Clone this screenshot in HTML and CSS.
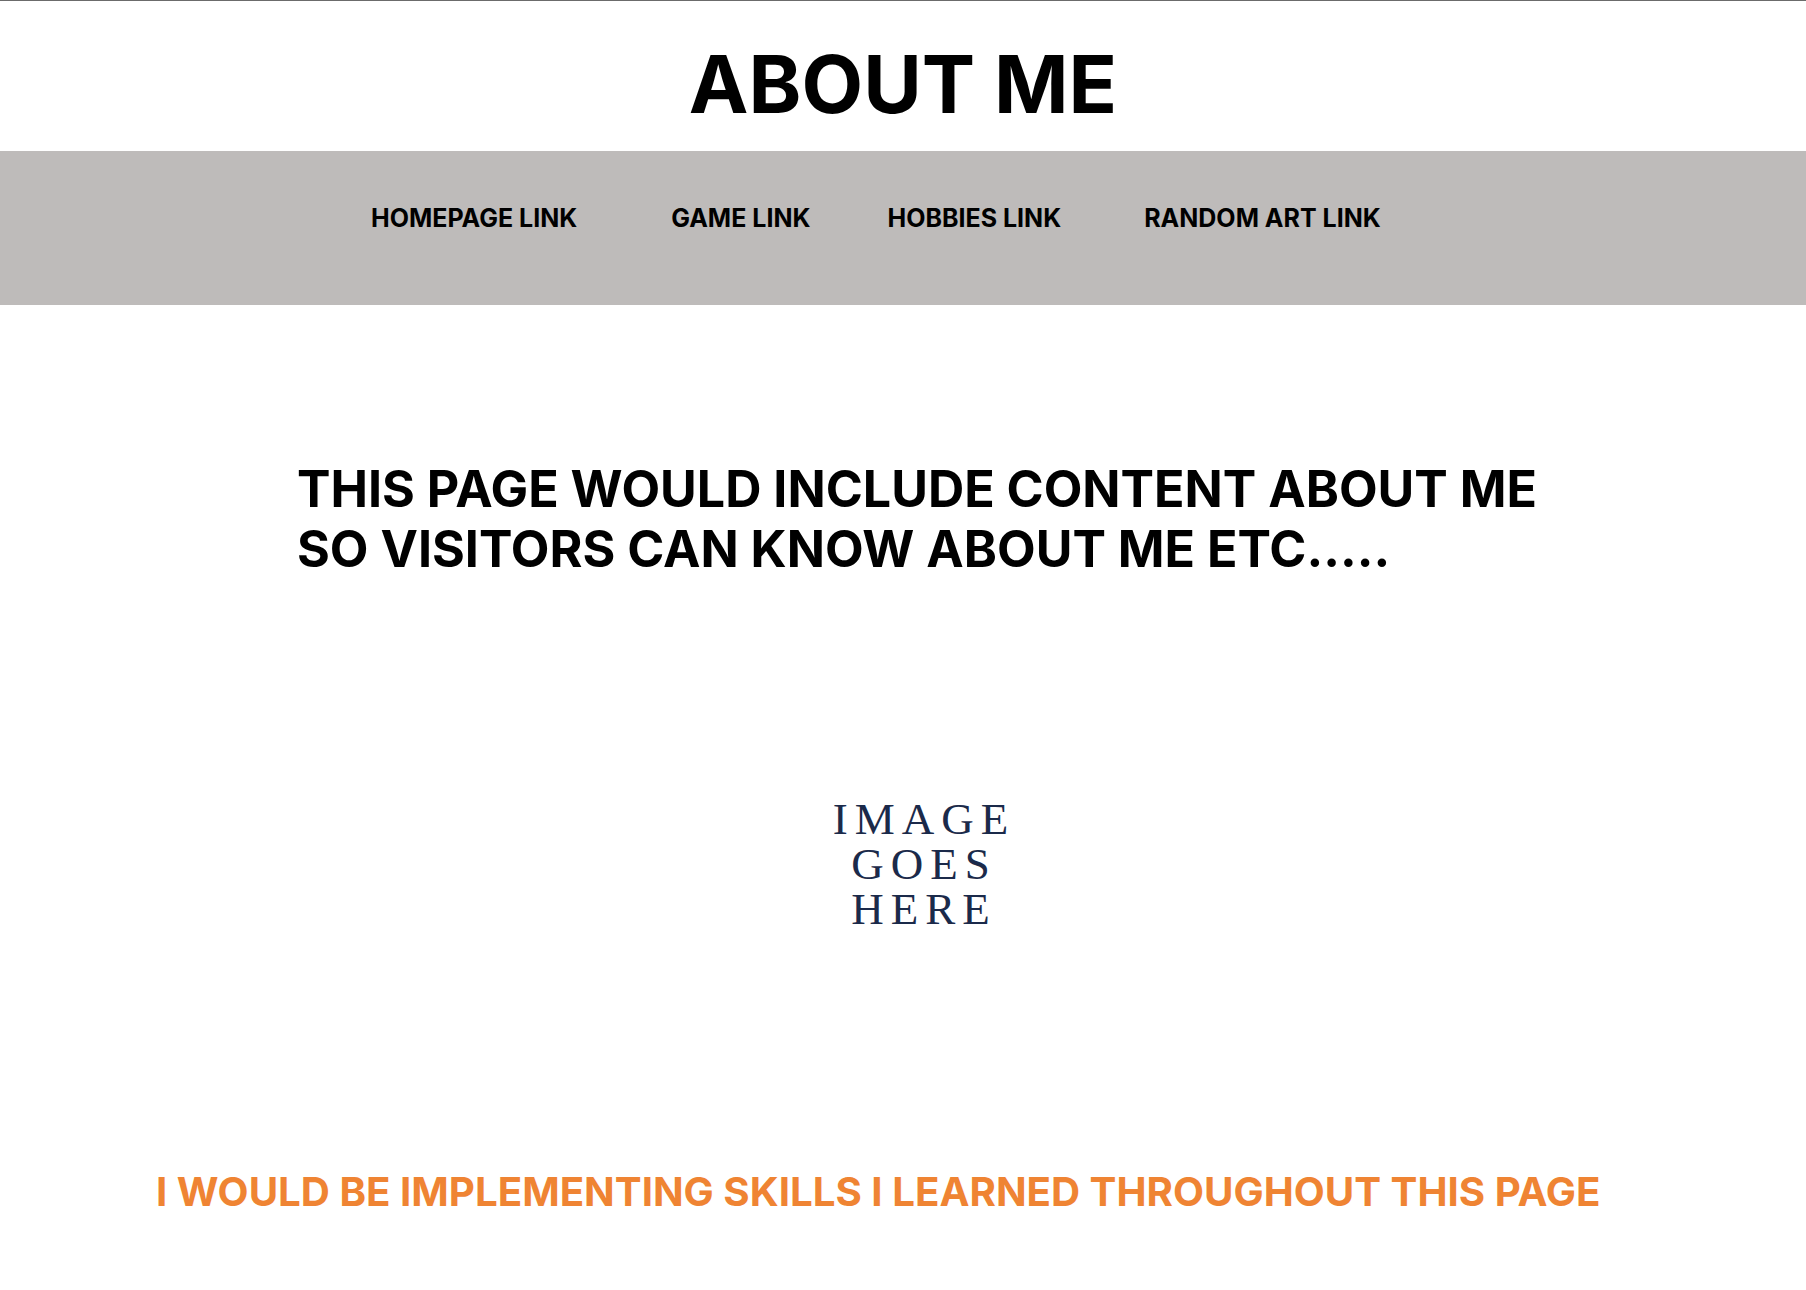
FILE: index.html
```html
<!DOCTYPE html>
<html lang="en">
<head>
<meta charset="utf-8">
<title>About Me</title>
<link rel="stylesheet" href="styles.css">
</head>
<body>
<header class="site-header">
  <h1 class="site-title">ABOUT ME</h1>
</header>
<nav class="main-nav">
  <ul class="nav-list">
    <li class="nav-item nav-home"><a href="#">HOMEPAGE LINK</a></li>
    <li class="nav-item nav-game"><a href="#">GAME LINK</a></li>
    <li class="nav-item nav-hobbies"><a href="#">HOBBIES LINK</a></li>
    <li class="nav-item nav-art"><a href="#">RANDOM ART LINK</a></li>
  </ul>
</nav>
<main class="content">
  <h2 class="intro">THIS PAGE WOULD INCLUDE CONTENT ABOUT ME<br>SO VISITORS CAN KNOW ABOUT ME ETC.....</h2>
  <div class="image-placeholder">
    <span>IMAGE</span>
    <span>GOES</span>
    <span>HERE</span>
  </div>
  <h3 class="skills">I WOULD BE IMPLEMENTING SKILLS I LEARNED THROUGHOUT THIS PAGE</h3>
</main>
</body>
</html>
```

FILE: styles.css
```css
* { box-sizing: border-box; }
html, body { margin: 0; padding: 0; background: #ffffff; }
body {
  font-family: Inter, "Liberation Sans", Arial, sans-serif;
  color: #000000;
}
.site-header {
  border-top: 1px solid #6b6b6b;
  padding: 34px 0 19px;
  text-align: center;
}
.site-title {
  margin: 0;
  font-size: 80px;
  line-height: 97px;
  font-weight: 700;
}
.main-nav {
  background: #bebbba;
  height: 154px;
  padding-top: 53px;
}
.nav-list {
  list-style: none;
  margin: 0;
  padding: 0 0 0 371px;
  display: flex;
}
.nav-item a {
  color: #000000;
  text-decoration: none;
  font-size: 25px;
  line-height: 29px;
  font-weight: 700;
}
.nav-game { margin-left: 94px; }
.nav-hobbies { margin-left: 77px; }
.nav-art { margin-left: 83px; }
.content {
  padding-top: 154px;
}
.intro {
  margin: 0 0 0 297px;
  font-size: 50.2px;
  line-height: 60px;
  font-weight: 700;
}
.image-placeholder {
  margin: 218px 0 0 calc(50% - 89px);
  width: 220px;
  display: flex;
  flex-direction: column;
  align-items: center;
  font-family: "Liberation Serif", "DejaVu Serif", serif;
  color: #1b2a4a;
  font-size: 45px;
  line-height: 45px;
  letter-spacing: 7px;
}
.skills {
  margin: 236px 0 0 156px;
  font-size: 40.25px;
  line-height: 48px;
  font-weight: 700;
  color: #ef8433;
}
```
